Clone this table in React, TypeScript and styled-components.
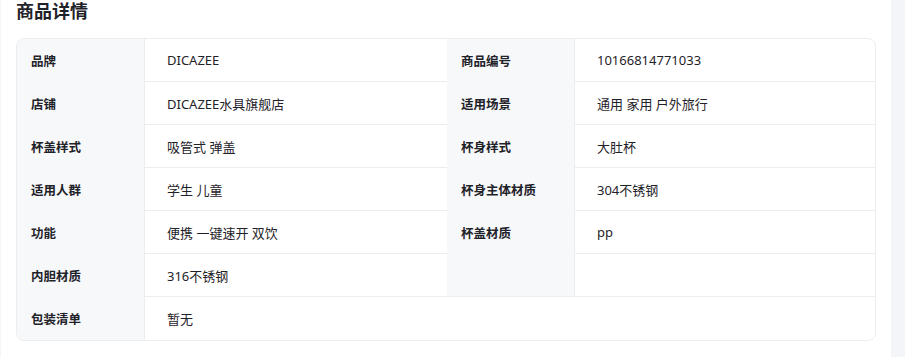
import { FC, Fragment } from "react";
import styled, { createGlobalStyle } from "styled-components";

const GlobalStyle = createGlobalStyle`
  html, body {
    margin: 0;
    padding: 0;
    background: #ffffff;
  }
  body {
    font-family: "Noto Sans", "Noto Sans CJK SC", sans-serif;
    color: #1f2329;
  }
`;

const Page = styled.div`
  display: flex;
  width: 916px;
  height: 357px;
  overflow: hidden;
`;

const Main = styled.div`
  width: 891px;
  border-left: 1px solid #f5f5f7;
  padding: 0 15px;
  box-sizing: border-box;
`;

const Side = styled.div`
  width: 14px;
  background: #f4f5f9;
`;

const Title = styled.h2`
  margin: 0 0 18px;
  font-size: 18px;
  line-height: 20px;
  font-weight: 700;
  color: #1f2329;
  font-family: "Noto Sans CJK SC", sans-serif;
`;

const Table = styled.div`
  display: grid;
  grid-template-columns: 128px 302px 128px 1fr;
  border: 1px solid #ebedf0;
  border-radius: 8px;
  overflow: hidden;
  width: 860px;
  box-sizing: border-box;
`;

const Label = styled.div<{ $line?: boolean }>`
  height: 43px;
  box-sizing: border-box;
  display: flex;
  align-items: center;
  padding-left: 14px;
  background: #f7f8fa;
  border-right: 1px solid #ebedf0;
  border-bottom: ${(p) => (p.$line ? "1px solid #ebedf0" : "none")};
  font-size: 12.5px;
  font-weight: 700;
  color: #1f2329;
  font-family: "Noto Sans CJK SC", sans-serif;
`;

const Value = styled.div<{ $last?: boolean; $span?: number }>`
  height: 43px;
  box-sizing: border-box;
  display: flex;
  align-items: center;
  padding-left: 22px;
  grid-column: span ${(p) => p.$span ?? 1};
  border-bottom: ${(p) => (p.$last ? "none" : "1px solid #ebedf0")};
  font-size: 13px;
  color: #1f2329;
  font-family: "Noto Sans", "Noto Sans CJK SC", sans-serif;
`;

type Item = [string, string];

const rows: Item[][] = [
  [["品牌", "DICAZEE"], ["商品编号", "10166814771033"]],
  [["店铺", "DICAZEE水具旗舰店"], ["适用场景", "通用 家用 户外旅行"]],
  [["杯盖样式", "吸管式 弹盖"], ["杯身样式", "大肚杯"]],
  [["适用人群", "学生 儿童"], ["杯身主体材质", "304不锈钢"]],
  [["功能", "便携 一键速开 双饮"], ["杯盖材质", "pp"]],
  [["内胆材质", "316不锈钢"], ["", ""]],
];

const App: FC = () => {
  return (
    <Page>
      <GlobalStyle />
      <Main>
        <Title>商品详情</Title>
        <Table>
          {rows.map((row, i) =>
            row.map(([label, value], j) => (
              <Fragment key={`${i}-${j}`}>
                <Label $line={label === "" && i === rows.length - 1}>{label}</Label>
                <Value>{value}</Value>
              </Fragment>
            ))
          )}
          <Label>包装清单</Label>
          <Value $span={3} $last>
            暂无
          </Value>
        </Table>
      </Main>
      <Side />
    </Page>
  );
};

export default App;
